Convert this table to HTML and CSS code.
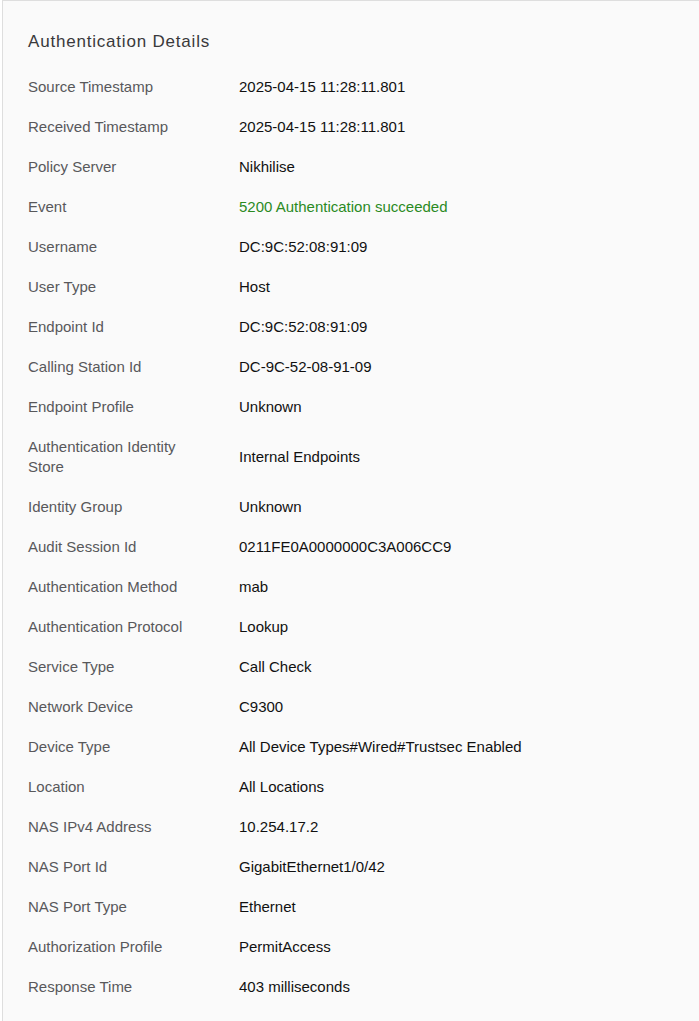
FILE: index.html
```html
<!DOCTYPE html>
<html>
<head>
<meta charset="utf-8">
<link rel="stylesheet" href="styles.css">
</head>
<body>
<div class="card">
  <h2 class="title">Authentication Details</h2>
  <div class="rows">
    <div class="label">Source Timestamp</div><div class="value">2025-04-15 11:28:11.801</div>
    <div class="label">Received Timestamp</div><div class="value">2025-04-15 11:28:11.801</div>
    <div class="label">Policy Server</div><div class="value">Nikhilise</div>
    <div class="label">Event</div><div class="value success">5200 Authentication succeeded</div>
    <div class="label">Username</div><div class="value">DC:9C:52:08:91:09</div>
    <div class="label">User Type</div><div class="value">Host</div>
    <div class="label">Endpoint Id</div><div class="value">DC:9C:52:08:91:09</div>
    <div class="label">Calling Station Id</div><div class="value">DC-9C-52-08-91-09</div>
    <div class="label">Endpoint Profile</div><div class="value">Unknown</div>
    <div class="label">Authentication Identity Store</div><div class="value">Internal Endpoints</div>
    <div class="label">Identity Group</div><div class="value">Unknown</div>
    <div class="label">Audit Session Id</div><div class="value">0211FE0A0000000C3A006CC9</div>
    <div class="label">Authentication Method</div><div class="value">mab</div>
    <div class="label">Authentication Protocol</div><div class="value">Lookup</div>
    <div class="label">Service Type</div><div class="value">Call Check</div>
    <div class="label">Network Device</div><div class="value">C9300</div>
    <div class="label">Device Type</div><div class="value">All Device Types#Wired#Trustsec Enabled</div>
    <div class="label">Location</div><div class="value">All Locations</div>
    <div class="label">NAS IPv4 Address</div><div class="value">10.254.17.2</div>
    <div class="label">NAS Port Id</div><div class="value">GigabitEthernet1/0/42</div>
    <div class="label">NAS Port Type</div><div class="value">Ethernet</div>
    <div class="label">Authorization Profile</div><div class="value">PermitAccess</div>
    <div class="label">Response Time</div><div class="value">403 milliseconds</div>
  </div>
</div>
</body>
</html>
```
FILE: styles.css
```css
html, body {
  margin: 0;
  padding: 0;
  background: #ffffff;
}
body {
  font-family: "Liberation Sans", Arial, sans-serif;
  font-size: 15px;
  line-height: 20px;
}
.card {
  margin-left: 2px;
  border: 1px solid #dedede;
  border-right: none;
  border-bottom: none;
  background: #fafafa;
  padding: 31px 0 14px 25px;
}
.title {
  margin: 0 0 15px 0;
  font-size: 17px;
  font-weight: normal;
  line-height: 20px;
  letter-spacing: 0.8px;
  color: #39393b;
}
.rows {
  display: grid;
  grid-template-columns: 211px 1fr;
  align-items: center;
}
.label {
  padding: 10px 30px 10px 0;
  color: #58585b;
}
.value {
  padding: 10px 0;
  color: #111111;
}
.value.success {
  color: #2b8a1f;
}
```
